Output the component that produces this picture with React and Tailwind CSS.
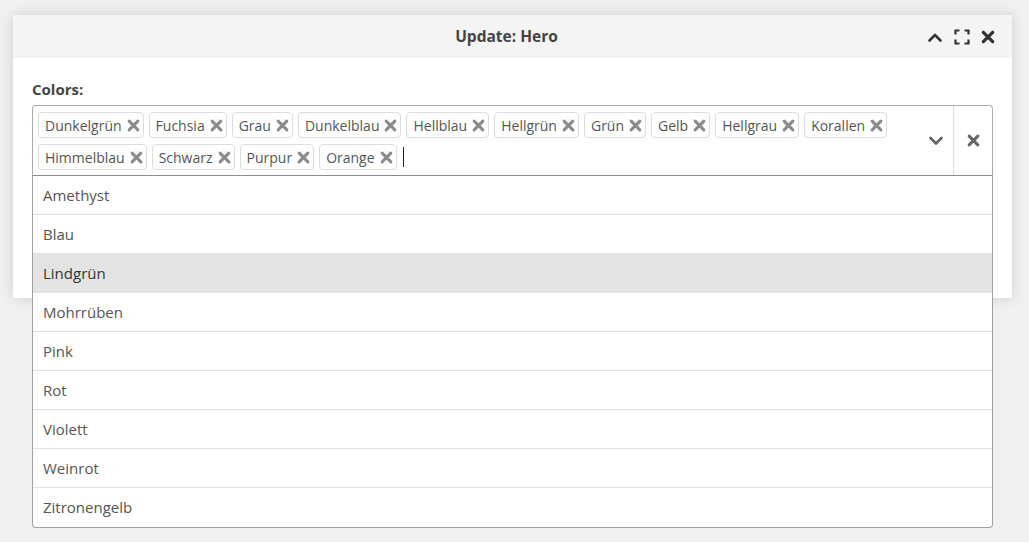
import React from "react";

const FONT = { fontFamily: '"Open Sans", "Noto Sans", Arial, sans-serif' };

const selected = [
  "Dunkelgrün", "Fuchsia", "Grau", "Dunkelblau", "Hellblau", "Hellgrün", "Grün",
  "Gelb", "Hellgrau", "Korallen", "Himmelblau", "Schwarz", "Purpur", "Orange",
];

const options = [
  "Amethyst", "Blau", "Lindgrün", "Mohrrüben", "Pink", "Rot", "Violett", "Weinrot", "Zitronengelb",
];

// bold rounded cross used on tags and buttons
function Cross({ size = 12, color = "#888", width = 3 }) {
  return (
    <svg width={size} height={size} viewBox="0 0 12 12" className="shrink-0">
      <path d="M2 2 L10 10 M10 2 L2 10" stroke={color} strokeWidth={width} strokeLinecap="round" fill="none" />
    </svg>
  );
}

function Tag({ label }) {
  return (
    <span className="flex h-[26px] items-center gap-[5px] rounded-[4px] border border-[#dcdcdc] bg-white pl-[6px] pr-[3px] text-[14px] text-[#555]">
      {label}
      <Cross size={13} color="#8a8a8a" width={2.8} />
    </span>
  );
}

export default function App() {
  return (
    <div className="min-h-[542px] bg-[#f0f0f0] pl-[13px] pt-[15px]" style={FONT}>
      <div className="h-[283px] w-[999px] bg-white shadow-[0_0_12px_rgba(0,0,0,0.14)]">
        {/* header */}
        <div className="flex h-[43px] items-center bg-[#f4f4f4]">
          <div className="w-[75px]" />
          <div className="flex-1 text-center text-[15.5px] font-bold text-[#444]">Update: Hero</div>
          <div className="flex w-[87px] items-center gap-[11px] pl-[2px]">
            <svg width="16" height="12" viewBox="0 0 16 12">
              <path d="M2.5 9.5 L8 4 L13.5 9.5" stroke="#333" strokeWidth="2.6" fill="none" strokeLinecap="round" strokeLinejoin="round" />
            </svg>
            <svg width="16" height="16" viewBox="0 0 16 16">
              <path d="M1.5 5.5 V1.5 H5.5 M10.5 1.5 H14.5 V5.5 M14.5 10.5 V14.5 H10.5 M5.5 14.5 H1.5 V10.5" stroke="#333" strokeWidth="2.2" fill="none" />
            </svg>
            <Cross size={14} color="#333" width={2.8} />
          </div>
        </div>

        {/* body */}
        <div className="px-[19px] pt-[21px]">
          <div className="text-[15px] font-bold leading-[20px] text-[#444]">Colors:</div>
          <div className="relative mt-[6px]">
            <div className="flex min-h-[71px] rounded-t-[4px] border border-[#aaa] border-b-[#8c8c8c]">
              <div className="flex flex-1 flex-wrap content-start items-center gap-x-[5px] gap-y-[6px] pl-[5px] pt-[6px]">
                {selected.map((s) => (
                  <Tag key={s} label={s} />
                ))}
                <span className="ml-[1px] h-[20px] w-[1px] bg-[#222]" />
              </div>
              <div className="flex w-[37px] items-center justify-center pl-[2px]">
                <svg width="16" height="10" viewBox="0 0 16 10">
                  <path d="M2.5 2 L8 7.5 L13.5 2" stroke="#666" strokeWidth="2.6" fill="none" strokeLinecap="round" strokeLinejoin="round" />
                </svg>
              </div>
              <div className="flex w-[39px] items-center justify-center border-l border-[#ddd]">
                <Cross size={13} color="#666" width={2.8} />
              </div>
            </div>

            {/* dropdown list */}
            <div className="absolute left-0 top-full z-10 w-[961px] overflow-hidden rounded-b-[4px] border border-t-0 border-[#a0a0a0] bg-white">
              {options.map((o, i) => (
                <div
                  key={o}
                  className={
                    "flex h-[39px] items-center pl-[10px] text-[15px] " +
                    (i < options.length - 1 ? "border-b border-[#e2e2e2] " : "") +
                    (o === "Lindgrün" ? "bg-[#e3e3e3] text-[#333]" : "text-[#555]")
                  }
                >
                  {o}
                </div>
              ))}
            </div>
          </div>
        </div>
      </div>
    </div>
  );
}
